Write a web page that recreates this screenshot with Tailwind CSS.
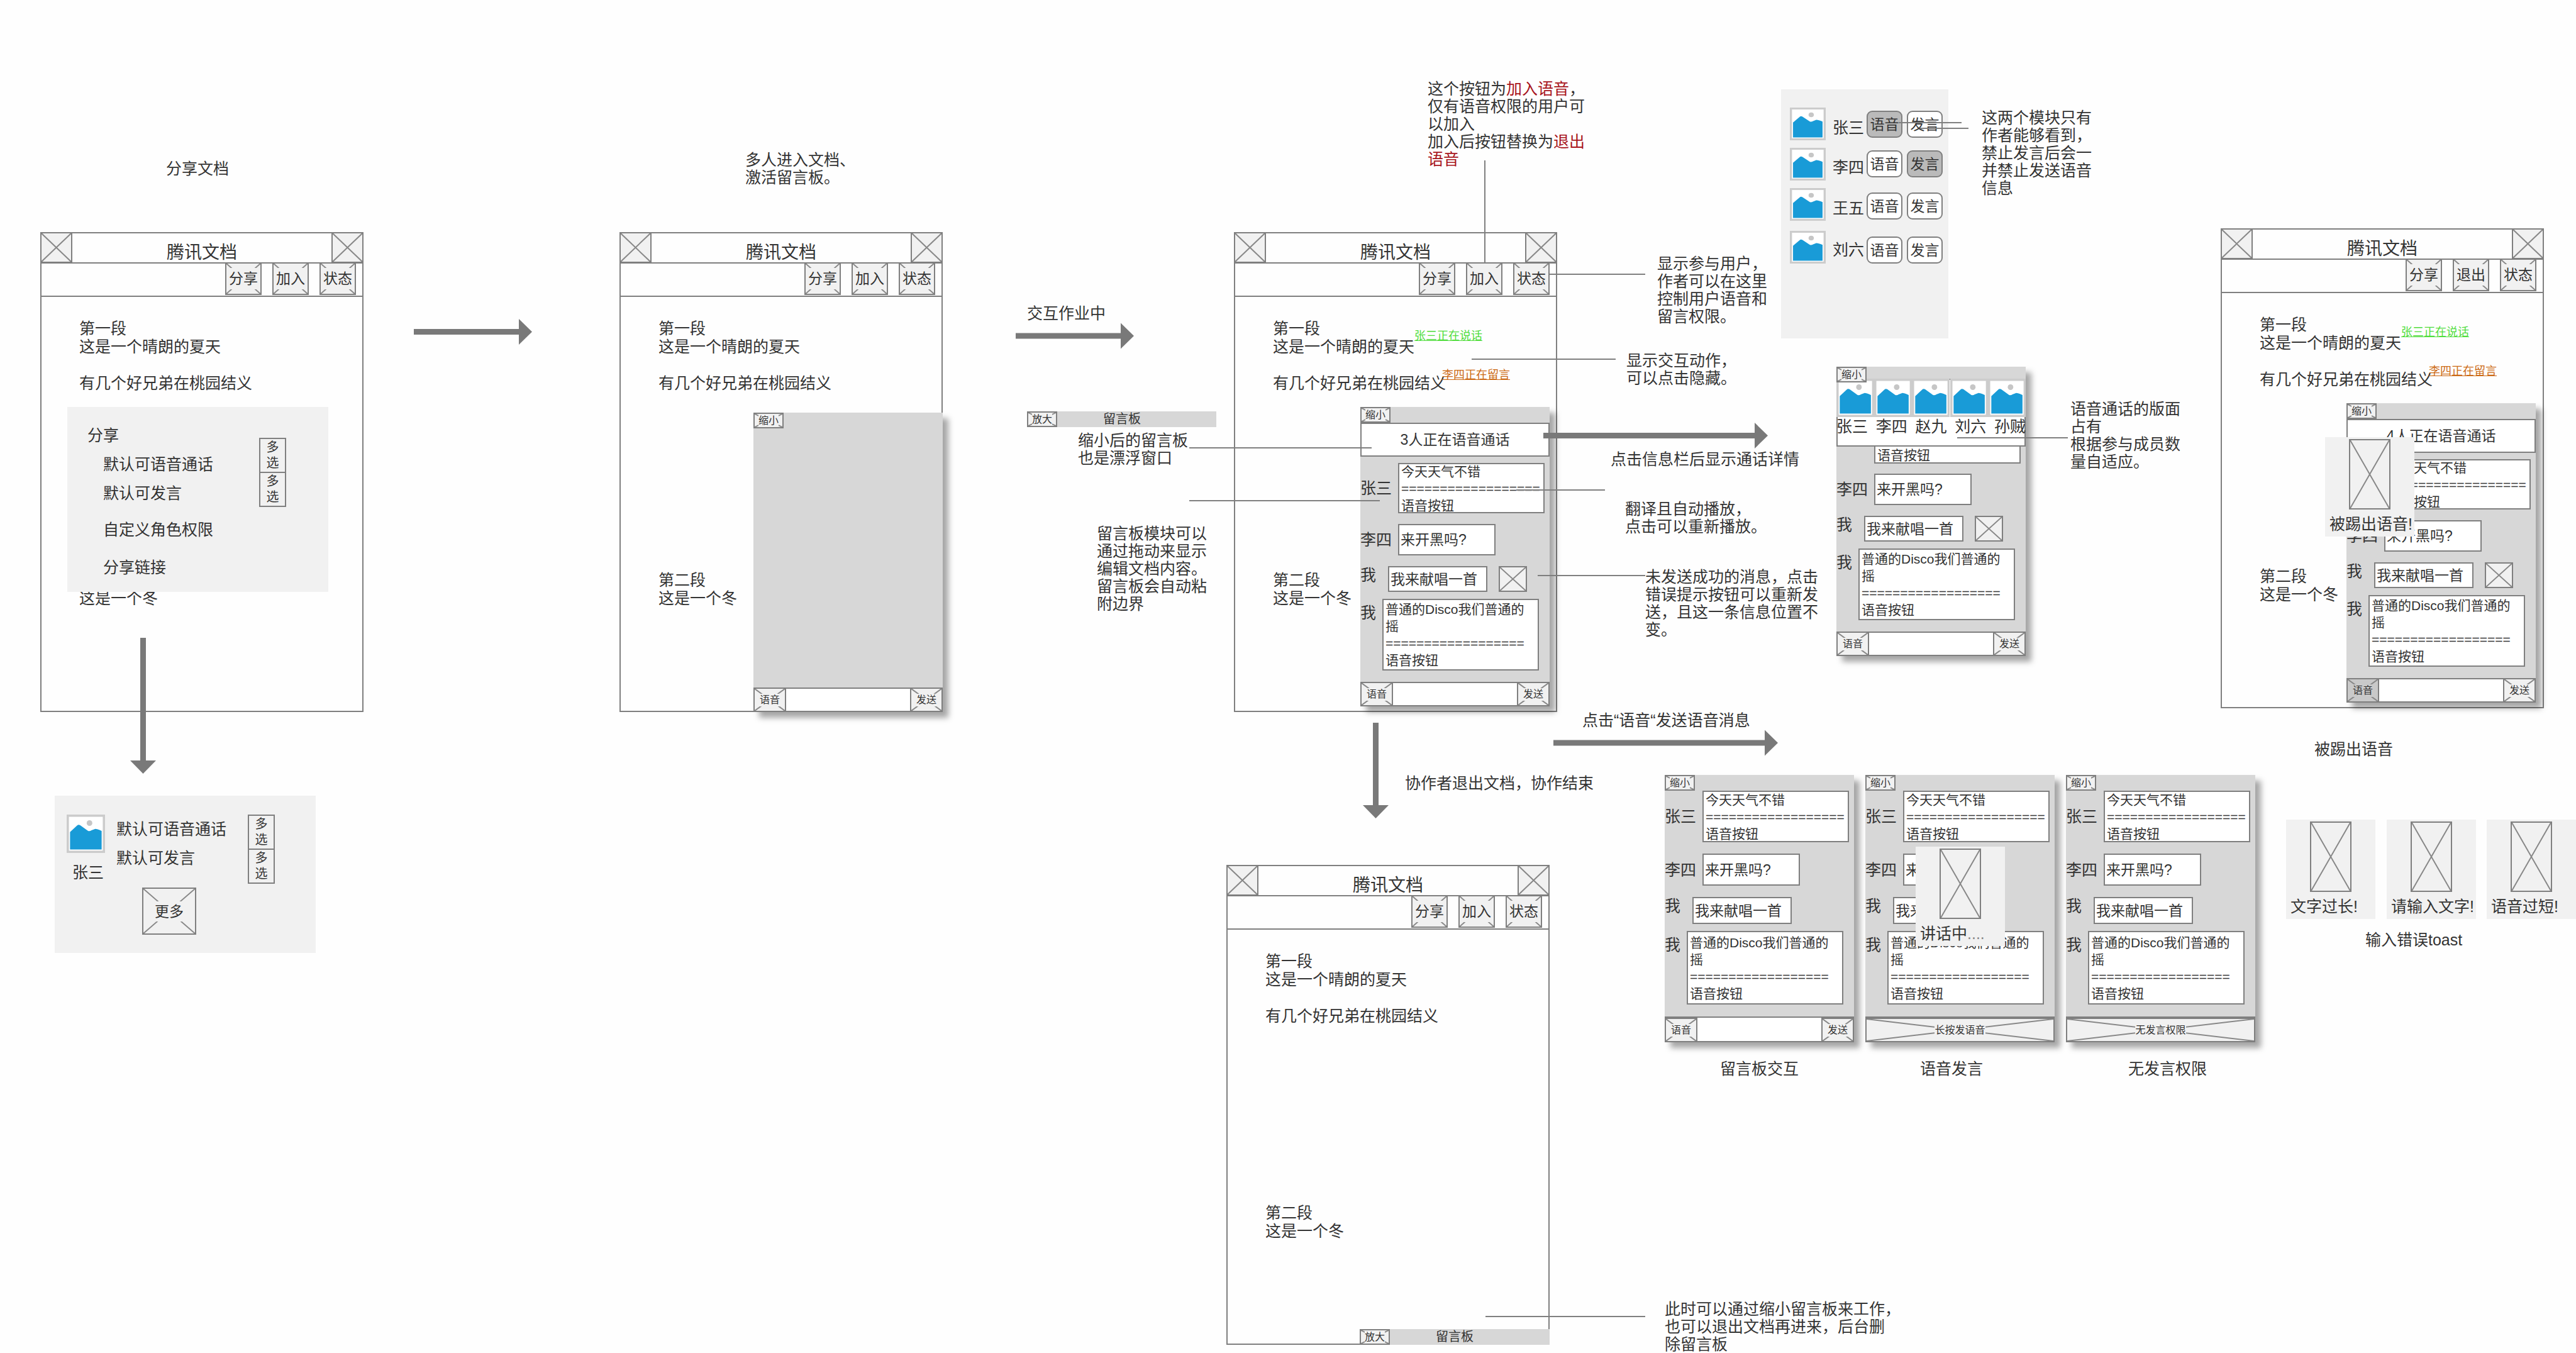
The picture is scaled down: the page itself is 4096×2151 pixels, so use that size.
<!DOCTYPE html>
<html lang="zh-CN">
<head>
<meta charset="utf-8">
<meta name="viewport" content="width=device-width, initial-scale=1">
<title>腾讯文档 留言板交互流程</title>
<script src="https://cdn.jsdelivr.net/npm/@tailwindcss/browser@4"></script>
</head>
<body class="bg-[#fefefe] font-['Liberation_Sans','Noto_Sans_CJK_SC',sans-serif] text-[25px] leading-[28px] text-[#333]">

<!-- shared shapes -->
<svg class="hidden" aria-hidden="true">
  <symbol id="cross" viewBox="0 0 100 100" preserveAspectRatio="none">
    <path d="M0 0L100 100M100 0L0 100" fill="none" stroke="#888" stroke-width="2" vector-effect="non-scaling-stroke"/>
  </symbol>
  <symbol id="picture" viewBox="0 0 68 68" preserveAspectRatio="none">
    <rect width="68" height="68" fill="#ccc"/>
    <rect x="4" y="4" width="60" height="60" fill="#fff"/>
    <circle cx="40.5" cy="15" r="5" fill="#c6c6c6"/>
    <path d="M6 31L19 19Q21 17 24 19L38 29Q41 30 44 28L50 25.500Q53 25 62 29V62H6Z" fill="#199bd7"/>
  </symbol>
</svg>

<main class="relative min-h-screen w-full overflow-hidden">

  <!-- captions and notes -->
  <p class="absolute left-[264px] top-[254px] whitespace-nowrap">分享文档</p>
  <p class="absolute left-[1185px] top-[240px] whitespace-nowrap">多人进入文档、<br>激活留言板。</p>
  <p class="absolute left-[1633px] top-[484px] whitespace-nowrap">交互作业中</p>
  <p class="absolute left-[2270px] top-[127px] whitespace-nowrap">这个按钮为<span class="text-[#a8141c]">加入语音</span>，<br>仅有语音权限的用户可<br>以加入<br>加入后按钮替换为<span class="text-[#a8141c]">退出<br>语音</span></p>
  <p class="absolute left-[2635px] top-[405px] whitespace-nowrap">显示参与用户，<br>作者可以在这里<br>控制用户语音和<br>留言权限。</p>
  <p class="absolute left-[2586px] top-[559px] whitespace-nowrap">显示交互动作，<br>可以点击隐藏。</p>
  <p class="absolute left-[3151px] top-[173px] whitespace-nowrap">这两个模块只有<br>作者能够看到，<br>禁止发言后会一<br>并禁止发送语音<br>信息</p>
  <p class="absolute left-[3292px] top-[636px] whitespace-nowrap">语音通话的版面<br>占有<br>根据参与成员数<br>量自适应。</p>
  <p class="absolute left-[1714px] top-[686px] whitespace-nowrap">缩小后的留言板<br>也是漂浮窗口</p>
  <p class="absolute left-[1744px] top-[834px] whitespace-nowrap">留言板模块可以<br>通过拖动来显示<br>编辑文档内容。<br>留言板会自动粘<br>附边界</p>
  <p class="absolute left-[2561px] top-[716px] whitespace-nowrap">点击信息栏后显示通话详情</p>
  <p class="absolute left-[2584px] top-[795px] whitespace-nowrap">翻译且自动播放，<br>点击可以重新播放。</p>
  <p class="absolute left-[2616px] top-[903px] whitespace-nowrap">未发送成功的消息，点击<br>错误提示按钮可以重新发<br>送，且这一条信息位置不<br>变。</p>
  <p class="absolute left-[2516px] top-[1131px] whitespace-nowrap">点击“语音“发送语音消息</p>
  <p class="absolute left-[2234px] top-[1231px] whitespace-nowrap">协作者退出文档，协作结束</p>
  <p class="absolute left-[2735px] top-[1685px] whitespace-nowrap">留言板交互</p>
  <p class="absolute left-[3053px] top-[1685px] whitespace-nowrap">语音发言</p>
  <p class="absolute left-[3384px] top-[1685px] whitespace-nowrap">无发言权限</p>
  <p class="absolute left-[3680px] top-[1177px] whitespace-nowrap">被踢出语音</p>
  <p class="absolute left-[3761px] top-[1480px] whitespace-nowrap">输入错误toast</p>
  <p class="absolute left-[2647px] top-[2067px] whitespace-nowrap">此时可以通过缩小留言板来工作，<br>也可以退出文档再进来，后台删<br>除留言板</p>

  <!-- screen 1: share -->
  <section class="absolute left-[64px] top-[369px] h-[763px] w-[514px] border-2 border-[#7f7f7f]">
    <header class="-mx-0.5 -mt-0.5 flex h-[50px] justify-between border-b-2 border-[#7f7f7f]">
      <button aria-label="返回" class="h-[49px] w-[51px] border-2 border-[#7f7f7f] bg-[#f1f1f1]"><svg class="size-full"><use href="#cross"/></svg></button>
      <h2 class="self-end text-[28px] leading-[30px]">腾讯文档</h2>
      <button aria-label="菜单" class="h-[49px] w-[51px] border-2 border-[#7f7f7f] bg-[#f1f1f1]"><svg class="size-full"><use href="#cross"/></svg></button>
    </header>
    <nav class="flex h-[53px] justify-end gap-[17px] border-b-2 border-[#7f7f7f] pr-[10px]">
      <button class="relative -mt-0.5 grid h-[52px] w-[58px] place-items-center border-2 border-[#7f7f7f] bg-[#f1f1f1] text-[23px]"><svg class="absolute inset-0 size-full"><use href="#cross"/></svg><span class="relative bg-[#f1f1f1] leading-[34px]">分享</span></button>
      <button class="relative -mt-0.5 grid h-[52px] w-[58px] place-items-center border-2 border-[#7f7f7f] bg-[#f1f1f1] text-[23px]"><svg class="absolute inset-0 size-full"><use href="#cross"/></svg><span class="relative bg-[#f1f1f1] leading-[34px]">加入</span></button>
      <button class="relative -mt-0.5 grid h-[52px] w-[58px] place-items-center border-2 border-[#7f7f7f] bg-[#f1f1f1] text-[23px]"><svg class="absolute inset-0 size-full"><use href="#cross"/></svg><span class="relative bg-[#f1f1f1] leading-[34px]">状态</span></button>
    </nav>
    <div class="pl-[60px] pt-[36px] leading-[29px]">
      <p>第一段<br>这是一个晴朗的夏天</p>
      <p class="mt-[29px]">有几个好兄弟在桃园结义</p>
      <p class="mt-[284px]">第二段<br>这是一个冬</p>
    </div>
  </section>
  <section class="absolute left-[107px] top-[647px] flex h-[294px] w-[415px] justify-between bg-[#f1f1f1] pl-[32px] pr-[67px]">
    <div class="pt-[31px]">
      <h3>分享</h3>
      <ul class="pl-[25px] pt-[18px]">
        <li>默认可语音通话</li>
        <li class="mt-[18px]">默认可发言</li>
        <li class="mt-[30px]">自定义角色权限</li>
        <li class="mt-[32px]">分享链接</li>
      </ul>
    </div>
    <div class="flex flex-col pt-[49px] text-[20px] leading-[25px]">
      <button class="grid h-[56px] w-[43px] place-items-center border-2 border-[#7f7f7f]"><span class="w-5">多选</span></button>
      <button class="-mt-0.5 grid h-[56px] w-[43px] place-items-center border-2 border-[#7f7f7f]"><span class="w-5">多选</span></button>
    </div>
  </section>

  <!-- permission card -->
  <section class="absolute left-[87px] top-[1265px] h-[250px] w-[415px] bg-[#f1f1f1] pl-[19px] pr-[65px] pt-[30px]">
    <div class="flex justify-between">
      <div class="flex gap-[18px]">
        <div>
          <svg class="size-[61px]"><use href="#picture"/></svg>
          <p class="pl-[9px] pt-[17px]">张三</p>
        </div>
        <ul class="pt-[9px]">
          <li>默认可语音通话</li>
          <li class="mt-[18px]">默认可发言</li>
        </ul>
      </div>
      <div class="flex flex-col text-[20px] leading-[25px]">
        <button class="grid h-[56px] w-[43px] place-items-center border-2 border-[#7f7f7f]"><span class="w-5">多选</span></button>
        <button class="-mt-0.5 grid h-[56px] w-[43px] place-items-center border-2 border-[#7f7f7f]"><span class="w-5">多选</span></button>
      </div>
    </div>
    <button class="relative ml-[120px] mt-[6px] grid h-[75px] w-[86px] place-items-center border-2 border-[#7f7f7f] text-[23px]"><svg class="absolute inset-0 size-full"><use href="#cross"/></svg><span class="relative bg-[#f1f1f1] leading-[32px]">更多</span></button>
  </section>

  <!-- screen 2: board opened -->
  <section class="absolute left-[985px] top-[369px] h-[763px] w-[514px] border-2 border-[#7f7f7f]">
    <header class="-mx-0.5 -mt-0.5 flex h-[50px] justify-between border-b-2 border-[#7f7f7f]">
      <button aria-label="返回" class="h-[49px] w-[51px] border-2 border-[#7f7f7f] bg-[#f1f1f1]"><svg class="size-full"><use href="#cross"/></svg></button>
      <h2 class="self-end text-[28px] leading-[30px]">腾讯文档</h2>
      <button aria-label="菜单" class="h-[49px] w-[51px] border-2 border-[#7f7f7f] bg-[#f1f1f1]"><svg class="size-full"><use href="#cross"/></svg></button>
    </header>
    <nav class="flex h-[53px] justify-end gap-[17px] border-b-2 border-[#7f7f7f] pr-[10px]">
      <button class="relative -mt-0.5 grid h-[52px] w-[58px] place-items-center border-2 border-[#7f7f7f] bg-[#f1f1f1] text-[23px]"><svg class="absolute inset-0 size-full"><use href="#cross"/></svg><span class="relative bg-[#f1f1f1] leading-[34px]">分享</span></button>
      <button class="relative -mt-0.5 grid h-[52px] w-[58px] place-items-center border-2 border-[#7f7f7f] bg-[#f1f1f1] text-[23px]"><svg class="absolute inset-0 size-full"><use href="#cross"/></svg><span class="relative bg-[#f1f1f1] leading-[34px]">加入</span></button>
      <button class="relative -mt-0.5 grid h-[52px] w-[58px] place-items-center border-2 border-[#7f7f7f] bg-[#f1f1f1] text-[23px]"><svg class="absolute inset-0 size-full"><use href="#cross"/></svg><span class="relative bg-[#f1f1f1] leading-[34px]">状态</span></button>
    </nav>
    <div class="pl-[60px] pt-[36px] leading-[29px]">
      <p>第一段<br>这是一个晴朗的夏天</p>
      <p class="mt-[29px]">有几个好兄弟在桃园结义</p>
      <p class="mt-[284px]">第二段<br>这是一个冬</p>
    </div>
  </section>
  <section class="absolute left-[1198px] top-[656px] flex h-[476px] w-[301px] flex-col justify-between bg-[#d7d7d7] shadow-[9px_9px_9px_rgba(0,0,0,0.35)]">
    <button class="relative grid h-[25px] w-12 place-items-center border-2 border-[#7f7f7f] bg-[#f1f1f1] text-[16px]"><svg class="absolute inset-0 size-full"><use href="#cross"/></svg><span class="relative bg-[#f1f1f1] leading-[17px]">缩小</span></button>
    <form class="flex h-[39px] text-[16px]">
      <button type="button" class="relative grid w-[52px] place-items-center border-2 border-[#7f7f7f] bg-[#f1f1f1]"><svg class="absolute inset-0 size-full"><use href="#cross"/></svg><span class="relative bg-[#f1f1f1] leading-[20px]">语音</span></button>
      <input aria-label="留言" class="min-w-0 flex-1 border-y-2 border-[#7f7f7f] bg-white">
      <button type="button" class="relative grid w-[52px] place-items-center border-2 border-[#7f7f7f] bg-[#f1f1f1]"><svg class="absolute inset-0 size-full"><use href="#cross"/></svg><span class="relative bg-[#f1f1f1] leading-[20px]">发送</span></button>
    </form>
  </section>

  <!-- minimised board -->
  <section class="absolute left-[1633px] top-[654px] flex h-[25px] w-[301px] gap-[73px] bg-[#d7d7d7]">
    <button class="relative grid w-12 place-items-center border-2 border-[#7f7f7f] bg-[#f1f1f1] text-[16px]"><svg class="absolute inset-0 size-full"><use href="#cross"/></svg><span class="relative bg-[#f1f1f1] leading-[17px]">放大</span></button>
    <h3 class="text-[20px] leading-[25px]">留言板</h3>
  </section>

  <!-- screen 3: collaborating -->
  <section class="absolute left-[1962px] top-[369px] h-[763px] w-[514px] border-2 border-[#7f7f7f]">
    <header class="-mx-0.5 -mt-0.5 flex h-[50px] justify-between border-b-2 border-[#7f7f7f]">
      <button aria-label="返回" class="h-[49px] w-[51px] border-2 border-[#7f7f7f] bg-[#f1f1f1]"><svg class="size-full"><use href="#cross"/></svg></button>
      <h2 class="self-end text-[28px] leading-[30px]">腾讯文档</h2>
      <button aria-label="菜单" class="h-[49px] w-[51px] border-2 border-[#7f7f7f] bg-[#f1f1f1]"><svg class="size-full"><use href="#cross"/></svg></button>
    </header>
    <nav class="flex h-[53px] justify-end gap-[17px] border-b-2 border-[#7f7f7f] pr-[10px]">
      <button class="relative -mt-0.5 grid h-[52px] w-[58px] place-items-center border-2 border-[#7f7f7f] bg-[#f1f1f1] text-[23px]"><svg class="absolute inset-0 size-full"><use href="#cross"/></svg><span class="relative bg-[#f1f1f1] leading-[34px]">分享</span></button>
      <button class="relative -mt-0.5 grid h-[52px] w-[58px] place-items-center border-2 border-[#7f7f7f] bg-[#f1f1f1] text-[23px]"><svg class="absolute inset-0 size-full"><use href="#cross"/></svg><span class="relative bg-[#f1f1f1] leading-[34px]">加入</span></button>
      <button class="relative -mt-0.5 grid h-[52px] w-[58px] place-items-center border-2 border-[#7f7f7f] bg-[#f1f1f1] text-[23px]"><svg class="absolute inset-0 size-full"><use href="#cross"/></svg><span class="relative bg-[#f1f1f1] leading-[34px]">状态</span></button>
    </nav>
    <div class="pl-[60px] pt-[36px] leading-[29px]">
      <p>第一段<br>这是一个晴朗的夏天</p>
      <p class="mt-[29px]">有几个好兄弟在桃园结义</p>
      <p class="mt-[284px]">第二段<br>这是一个冬</p>
    </div>
    <a href="#" class="absolute left-[285px] top-[151px] text-[18px] leading-[24px] text-[#4fdd3b] underline">张三正在说话</a>
    <a href="#" class="absolute left-[329px] top-[213px] text-[18px] leading-[24px] text-[#cc6a14] underline">李四正在留言</a>
  </section>
  <section class="absolute left-[2163px] top-[647px] w-[301px] bg-[#d7d7d7] shadow-[9px_9px_9px_rgba(0,0,0,0.35)]">
    <button class="relative grid h-[25px] w-12 place-items-center border-2 border-[#7f7f7f] bg-[#f1f1f1] text-[16px]"><svg class="absolute inset-0 size-full"><use href="#cross"/></svg><span class="relative bg-[#f1f1f1] leading-[17px]">缩小</span></button>
    <button class="grid h-[54px] w-full place-items-center border-2 border-[#7f7f7f] bg-white text-[23px]">3人正在语音通话</button>
    <ul class="pt-[10px]">
      <li class="flex items-center"><b class="w-[60px] font-normal">张三</b><p class="flex h-[80px] w-[233px] items-center border-2 border-[#7f7f7f] bg-white pl-[3px] text-[21px] leading-[27px]">今天天气不错<br>==================<br>语音按钮</p></li>
      <li class="mt-[17px] flex items-center"><b class="w-[60px] font-normal">李四</b><p class="flex h-[50px] w-[155px] items-center border-2 border-[#7f7f7f] bg-white pl-[2px] text-[23px]">来开黑吗?</p></li>
      <li class="mt-[17px] flex"><b class="w-[44px] font-normal">我</b><p class="flex h-[41px] w-[158px] items-center border-2 border-[#7f7f7f] bg-white pl-[2px] text-[23px]">我来献唱一首</p><button aria-label="重新发送" class="ml-[18px] h-[41px] w-[45px] border-2 border-[#7f7f7f] bg-[#f1f1f1]"><svg class="size-full"><use href="#cross"/></svg></button></li>
      <li class="mt-[11px] flex"><b class="w-[35px] pt-[8px] font-normal">我</b><p class="flex h-[114px] w-[249px] items-center border-2 border-[#7f7f7f] bg-white pl-[3px] text-[21px] leading-[27px]">普通的Disco我们普通的<br>摇<br>==================<br>语音按钮</p></li>
    </ul>
    <form class="mt-[18px] flex h-[39px] text-[16px]">
      <button type="button" class="relative grid w-[52px] place-items-center border-2 border-[#7f7f7f] bg-[#f1f1f1]"><svg class="absolute inset-0 size-full"><use href="#cross"/></svg><span class="relative bg-[#f1f1f1] leading-[20px]">语音</span></button>
      <input aria-label="留言" class="min-w-0 flex-1 border-y-2 border-[#7f7f7f] bg-white">
      <button type="button" class="relative grid w-[52px] place-items-center border-2 border-[#7f7f7f] bg-[#f1f1f1]"><svg class="absolute inset-0 size-full"><use href="#cross"/></svg><span class="relative bg-[#f1f1f1] leading-[20px]">发送</span></button>
    </form>
  </section>

  <!-- participants -->
  <section class="absolute left-[2832px] top-[142px] flex h-[396px] w-[266px] flex-col bg-[#f1f1f1] pl-[14px] pt-[29px]">
    <div class="flex items-start">
      <svg class="h-[52px] w-[57px]"><use href="#picture"/></svg><span class="ml-[11px] mt-[18px] w-[54px]">张三</span>
      <button aria-pressed="true" class="mt-[5px] h-[43px] w-[57px] rounded-[9px] border-2 border-[#7f7f7f] bg-[#bababa] text-[23px]">语音</button>
      <button class="ml-[7px] mt-[5px] h-[43px] w-[57px] rounded-[9px] border-2 border-[#7f7f7f] bg-white text-[23px]">发言</button>
    </div>
    <div class="mt-[12px] flex items-start">
      <svg class="h-[52px] w-[57px]"><use href="#picture"/></svg><span class="ml-[11px] mt-[17px] w-[54px]">李四</span>
      <button class="mt-[4px] h-[43px] w-[57px] rounded-[9px] border-2 border-[#7f7f7f] bg-white text-[23px]">语音</button>
      <button aria-pressed="true" class="ml-[7px] mt-[4px] h-[43px] w-[57px] rounded-[9px] border-2 border-[#7f7f7f] bg-[#bababa] text-[23px]">发言</button>
    </div>
    <div class="mt-[12px] flex items-start">
      <svg class="h-[52px] w-[57px]"><use href="#picture"/></svg><span class="ml-[11px] mt-[18px] w-[54px]">王五</span>
      <button class="mt-[7px] h-[43px] w-[57px] rounded-[9px] border-2 border-[#7f7f7f] bg-white text-[23px]">语音</button>
      <button class="ml-[7px] mt-[7px] h-[43px] w-[57px] rounded-[9px] border-2 border-[#7f7f7f] bg-white text-[23px]">发言</button>
    </div>
    <div class="mt-[16px] flex items-start">
      <svg class="h-[52px] w-[57px]"><use href="#picture"/></svg><span class="ml-[11px] mt-[16px] w-[54px]">刘六</span>
      <button class="mt-[9px] h-[43px] w-[57px] rounded-[9px] border-2 border-[#7f7f7f] bg-white text-[23px]">语音</button>
      <button class="ml-[7px] mt-[9px] h-[43px] w-[57px] rounded-[9px] border-2 border-[#7f7f7f] bg-white text-[23px]">发言</button>
    </div>
  </section>

  <!-- call details -->
  <section class="absolute left-[2920px] top-[583px] w-[301px] bg-[#d7d7d7] shadow-[9px_9px_9px_rgba(0,0,0,0.35)]">
    <button class="relative z-10 grid h-[25px] w-12 place-items-center border-2 border-[#7f7f7f] bg-[#f1f1f1] text-[16px]"><svg class="absolute inset-0 size-full"><use href="#cross"/></svg><span class="relative bg-[#f1f1f1] leading-[17px]">缩小</span></button>
    <div class="-mt-[6px] h-[108px] border-2 border-[#7f7f7f] bg-white">
      <div class="-mx-0.5 -mt-0.5 grid grid-cols-5">
        <svg class="h-[61px] w-full"><use href="#picture"/></svg>
        <svg class="h-[61px] w-full"><use href="#picture"/></svg>
        <svg class="h-[61px] w-full"><use href="#picture"/></svg>
        <svg class="h-[61px] w-full"><use href="#picture"/></svg>
        <svg class="h-[61px] w-full"><use href="#picture"/></svg>
      </div>
      <div class="-mx-0.5 flex justify-between pt-px"><span>张三</span><span>李四</span><span>赵九</span><span>刘六</span><span>孙贼</span></div>
    </div>
    <ul>
      <li class="pl-[60px]"><p class="h-[27px] w-[233px] border-2 border-t-0 border-[#7f7f7f] bg-white pl-[3px] text-[21px] leading-[27px]">语音按钮</p></li>
      <li class="mt-[16px] flex items-center"><b class="w-[60px] font-normal">李四</b><p class="flex h-[50px] w-[155px] items-center border-2 border-[#7f7f7f] bg-white pl-[2px] text-[23px]">来开黑吗?</p></li>
      <li class="mt-[17px] flex"><b class="w-[44px] font-normal">我</b><p class="flex h-[41px] w-[158px] items-center border-2 border-[#7f7f7f] bg-white pl-[2px] text-[23px]">我来献唱一首</p><button aria-label="重新发送" class="ml-[18px] h-[41px] w-[45px] border-2 border-[#7f7f7f] bg-[#f1f1f1]"><svg class="size-full"><use href="#cross"/></svg></button></li>
      <li class="mt-[11px] flex"><b class="w-[35px] pt-[8px] font-normal">我</b><p class="flex h-[114px] w-[249px] items-center border-2 border-[#7f7f7f] bg-white pl-[3px] text-[21px] leading-[27px]">普通的Disco我们普通的<br>摇<br>==================<br>语音按钮</p></li>
    </ul>
    <form class="mt-[18px] flex h-[39px] text-[16px]">
      <button type="button" class="relative grid w-[52px] place-items-center border-2 border-[#7f7f7f] bg-[#f1f1f1]"><svg class="absolute inset-0 size-full"><use href="#cross"/></svg><span class="relative bg-[#f1f1f1] leading-[20px]">语音</span></button>
      <input aria-label="留言" class="min-w-0 flex-1 border-y-2 border-[#7f7f7f] bg-white">
      <button type="button" class="relative grid w-[52px] place-items-center border-2 border-[#7f7f7f] bg-[#f1f1f1]"><svg class="absolute inset-0 size-full"><use href="#cross"/></svg><span class="relative bg-[#f1f1f1] leading-[20px]">发送</span></button>
    </form>
  </section>

  <!-- screen 4: collaboration ended -->
  <section class="absolute left-[1950px] top-[1375px] h-[763px] w-[514px] border-2 border-[#7f7f7f]">
    <header class="-mx-0.5 -mt-0.5 flex h-[50px] justify-between border-b-2 border-[#7f7f7f]">
      <button aria-label="返回" class="h-[49px] w-[51px] border-2 border-[#7f7f7f] bg-[#f1f1f1]"><svg class="size-full"><use href="#cross"/></svg></button>
      <h2 class="self-end text-[28px] leading-[30px]">腾讯文档</h2>
      <button aria-label="菜单" class="h-[49px] w-[51px] border-2 border-[#7f7f7f] bg-[#f1f1f1]"><svg class="size-full"><use href="#cross"/></svg></button>
    </header>
    <nav class="flex h-[53px] justify-end gap-[17px] border-b-2 border-[#7f7f7f] pr-[10px]">
      <button class="relative -mt-0.5 grid h-[52px] w-[58px] place-items-center border-2 border-[#7f7f7f] bg-[#f1f1f1] text-[23px]"><svg class="absolute inset-0 size-full"><use href="#cross"/></svg><span class="relative bg-[#f1f1f1] leading-[34px]">分享</span></button>
      <button class="relative -mt-0.5 grid h-[52px] w-[58px] place-items-center border-2 border-[#7f7f7f] bg-[#f1f1f1] text-[23px]"><svg class="absolute inset-0 size-full"><use href="#cross"/></svg><span class="relative bg-[#f1f1f1] leading-[34px]">加入</span></button>
      <button class="relative -mt-0.5 grid h-[52px] w-[58px] place-items-center border-2 border-[#7f7f7f] bg-[#f1f1f1] text-[23px]"><svg class="absolute inset-0 size-full"><use href="#cross"/></svg><span class="relative bg-[#f1f1f1] leading-[34px]">状态</span></button>
    </nav>
    <div class="pl-[60px] pt-[36px] leading-[29px]">
      <p>第一段<br>这是一个晴朗的夏天</p>
      <p class="mt-[29px]">有几个好兄弟在桃园结义</p>
      <p class="mt-[284px]">第二段<br>这是一个冬</p>
    </div>
  </section>
  <section class="absolute left-[2162px] top-[2113px] flex h-[25px] w-[302px] gap-[73px] bg-[#d7d7d7]">
    <button class="relative grid w-12 place-items-center border-2 border-[#7f7f7f] bg-[#f1f1f1] text-[16px]"><svg class="absolute inset-0 size-full"><use href="#cross"/></svg><span class="relative bg-[#f1f1f1] leading-[17px]">放大</span></button>
    <h3 class="text-[20px] leading-[25px]">留言板</h3>
  </section>

  <!-- board variant: default -->
  <section class="absolute left-[2647px] top-[1232px] w-[301px] bg-[#d7d7d7] shadow-[9px_9px_9px_rgba(0,0,0,0.35)]">
    <button class="relative grid h-[25px] w-12 place-items-center border-2 border-[#7f7f7f] bg-[#f1f1f1] text-[16px]"><svg class="absolute inset-0 size-full"><use href="#cross"/></svg><span class="relative bg-[#f1f1f1] leading-[17px]">缩小</span></button>
    <ul>
      <li class="flex items-center"><b class="w-[60px] font-normal">张三</b><p class="flex h-[82px] w-[233px] items-center border-2 border-[#7f7f7f] bg-white pl-[3px] text-[21px] leading-[27px]">今天天气不错<br>==================<br>语音按钮</p></li>
      <li class="mt-[18px] flex items-center"><b class="w-[60px] font-normal">李四</b><p class="flex h-[51px] w-[155px] items-center border-2 border-[#7f7f7f] bg-white pl-[2px] text-[23px]">来开黑吗?</p></li>
      <li class="mt-[18px] flex"><b class="w-[44px] font-normal">我</b><p class="flex h-[43px] w-[158px] items-center border-2 border-[#7f7f7f] bg-white pl-[2px] text-[23px]">我来献唱一首</p></li>
      <li class="mt-[11px] flex"><b class="w-[35px] pt-[8px] font-normal">我</b><p class="flex h-[117px] w-[249px] items-center border-2 border-[#7f7f7f] bg-white pl-[3px] text-[21px] leading-[27px]">普通的Disco我们普通的<br>摇<br>==================<br>语音按钮</p></li>
    </ul>
    <form class="mt-[19px] flex h-[41px] border-2 border-[#7f7f7f] bg-white text-[16px]">
      <button type="button" class="relative -mb-0.5 -ml-0.5 grid w-[52px] place-items-center border-2 border-[#7f7f7f] bg-[#f1f1f1]"><svg class="absolute inset-0 size-full"><use href="#cross"/></svg><span class="relative bg-[#f1f1f1] leading-[20px]">语音</span></button>
      <input aria-label="留言" class="min-w-0 flex-1 bg-white">
      <button type="button" class="relative -mb-0.5 -mr-0.5 grid w-[52px] place-items-center border-2 border-[#7f7f7f] bg-[#f1f1f1]"><svg class="absolute inset-0 size-full"><use href="#cross"/></svg><span class="relative bg-[#f1f1f1] leading-[20px]">发送</span></button>
    </form>
  </section>

  <!-- board variant: speaking -->
  <section class="absolute left-[2966px] top-[1232px] w-[301px] bg-[#d7d7d7] shadow-[9px_9px_9px_rgba(0,0,0,0.35)]">
    <button class="relative grid h-[25px] w-12 place-items-center border-2 border-[#7f7f7f] bg-[#f1f1f1] text-[16px]"><svg class="absolute inset-0 size-full"><use href="#cross"/></svg><span class="relative bg-[#f1f1f1] leading-[17px]">缩小</span></button>
    <ul>
      <li class="flex items-center"><b class="w-[60px] font-normal">张三</b><p class="flex h-[82px] w-[233px] items-center border-2 border-[#7f7f7f] bg-white pl-[3px] text-[21px] leading-[27px]">今天天气不错<br>==================<br>语音按钮</p></li>
      <li class="mt-[18px] flex items-center"><b class="w-[60px] font-normal">李四</b><p class="flex h-[51px] w-[155px] items-center border-2 border-[#7f7f7f] bg-white pl-[2px] text-[23px]">来开黑吗?</p></li>
      <li class="mt-[18px] flex"><b class="w-[44px] font-normal">我</b><p class="flex h-[43px] w-[158px] items-center border-2 border-[#7f7f7f] bg-white pl-[2px] text-[23px]">我来献唱一首</p></li>
      <li class="mt-[11px] flex"><b class="w-[35px] pt-[8px] font-normal">我</b><p class="flex h-[117px] w-[249px] items-center border-2 border-[#7f7f7f] bg-white pl-[3px] text-[21px] leading-[27px]">普通的Disco我们普通的<br>摇<br>==================<br>语音按钮</p></li>
    </ul>
    <button class="relative mt-[19px] grid h-[41px] w-full place-items-center border-2 border-t-4 border-[#7f7f7f] bg-[#f1f1f1] text-[16px]"><svg class="absolute inset-0 size-full"><use href="#cross"/></svg><span class="relative bg-[#f1f1f1] leading-[20px]">长按发语音</span></button>
  </section>
  <div class="absolute left-[3046px] top-[1346px] h-[158px] w-[142px] bg-[#f1f1f1] pt-[3px]">
    <div class="mx-auto h-[112px] w-[66px] border-2 border-[#7f7f7f]"><svg class="size-full"><use href="#cross"/></svg></div>
    <p class="whitespace-nowrap pl-[7px] pt-[9px]">讲话中<span class="text-[#888]">....</span></p>
  </div>

  <!-- board variant: muted -->
  <section class="absolute left-[3285px] top-[1232px] w-[301px] bg-[#d7d7d7] shadow-[9px_9px_9px_rgba(0,0,0,0.35)]">
    <button class="relative grid h-[25px] w-12 place-items-center border-2 border-[#7f7f7f] bg-[#f1f1f1] text-[16px]"><svg class="absolute inset-0 size-full"><use href="#cross"/></svg><span class="relative bg-[#f1f1f1] leading-[17px]">缩小</span></button>
    <ul>
      <li class="flex items-center"><b class="w-[60px] font-normal">张三</b><p class="flex h-[82px] w-[233px] items-center border-2 border-[#7f7f7f] bg-white pl-[3px] text-[21px] leading-[27px]">今天天气不错<br>==================<br>语音按钮</p></li>
      <li class="mt-[18px] flex items-center"><b class="w-[60px] font-normal">李四</b><p class="flex h-[51px] w-[155px] items-center border-2 border-[#7f7f7f] bg-white pl-[2px] text-[23px]">来开黑吗?</p></li>
      <li class="mt-[18px] flex"><b class="w-[44px] font-normal">我</b><p class="flex h-[43px] w-[158px] items-center border-2 border-[#7f7f7f] bg-white pl-[2px] text-[23px]">我来献唱一首</p></li>
      <li class="mt-[11px] flex"><b class="w-[35px] pt-[8px] font-normal">我</b><p class="flex h-[117px] w-[249px] items-center border-2 border-[#7f7f7f] bg-white pl-[3px] text-[21px] leading-[27px]">普通的Disco我们普通的<br>摇<br>==================<br>语音按钮</p></li>
    </ul>
    <button class="relative mt-[19px] grid h-[41px] w-full place-items-center border-2 border-t-4 border-[#7f7f7f] bg-[#f1f1f1] text-[16px]"><svg class="absolute inset-0 size-full"><use href="#cross"/></svg><span class="relative bg-[#f1f1f1] leading-[20px]">无发言权限</span></button>
  </section>

  <!-- screen 5: removed from the call -->
  <section class="absolute left-[3531px] top-[363px] h-[763px] w-[514px] border-2 border-[#7f7f7f]">
    <header class="-mx-0.5 -mt-0.5 flex h-[50px] justify-between border-b-2 border-[#7f7f7f]">
      <button aria-label="返回" class="h-[49px] w-[51px] border-2 border-[#7f7f7f] bg-[#f1f1f1]"><svg class="size-full"><use href="#cross"/></svg></button>
      <h2 class="self-end text-[28px] leading-[30px]">腾讯文档</h2>
      <button aria-label="菜单" class="h-[49px] w-[51px] border-2 border-[#7f7f7f] bg-[#f1f1f1]"><svg class="size-full"><use href="#cross"/></svg></button>
    </header>
    <nav class="flex h-[53px] justify-end gap-[17px] border-b-2 border-[#7f7f7f] pr-[10px]">
      <button class="relative -mt-0.5 grid h-[52px] w-[58px] place-items-center border-2 border-[#7f7f7f] bg-[#f1f1f1] text-[23px]"><svg class="absolute inset-0 size-full"><use href="#cross"/></svg><span class="relative bg-[#f1f1f1] leading-[34px]">分享</span></button>
      <button class="relative -mt-0.5 grid h-[52px] w-[58px] place-items-center border-2 border-[#7f7f7f] bg-[#f1f1f1] text-[23px]"><svg class="absolute inset-0 size-full"><use href="#cross"/></svg><span class="relative bg-[#f1f1f1] leading-[34px]">退出</span></button>
      <button class="relative -mt-0.5 grid h-[52px] w-[58px] place-items-center border-2 border-[#7f7f7f] bg-[#f1f1f1] text-[23px]"><svg class="absolute inset-0 size-full"><use href="#cross"/></svg><span class="relative bg-[#f1f1f1] leading-[34px]">状态</span></button>
    </nav>
    <div class="pl-[60px] pt-[36px] leading-[29px]">
      <p>第一段<br>这是一个晴朗的夏天</p>
      <p class="mt-[29px]">有几个好兄弟在桃园结义</p>
      <p class="mt-[284px]">第二段<br>这是一个冬</p>
    </div>
    <a href="#" class="absolute left-[285px] top-[151px] text-[18px] leading-[24px] text-[#4fdd3b] underline">张三正在说话</a>
    <a href="#" class="absolute left-[329px] top-[213px] text-[18px] leading-[24px] text-[#cc6a14] underline">李四正在留言</a>
  </section>
  <section class="absolute left-[3731px] top-[641px] w-[301px] bg-[#d7d7d7] shadow-[9px_9px_9px_rgba(0,0,0,0.35)]">
    <button class="relative grid h-[25px] w-12 place-items-center border-2 border-[#7f7f7f] bg-[#f1f1f1] text-[16px]"><svg class="absolute inset-0 size-full"><use href="#cross"/></svg><span class="relative bg-[#f1f1f1] leading-[17px]">缩小</span></button>
    <button class="grid h-[54px] w-full place-items-center border-2 border-[#7f7f7f] bg-white text-[23px]">4人正在语音通话</button>
    <ul class="pt-[10px]">
      <li class="flex items-center"><b class="w-[60px] font-normal">张三</b><p class="flex h-[80px] w-[233px] items-center border-2 border-[#7f7f7f] bg-white pl-[3px] text-[21px] leading-[27px]">今天天气不错<br>==================<br>语音按钮</p></li>
      <li class="mt-[17px] flex items-center"><b class="w-[60px] font-normal">李四</b><p class="flex h-[50px] w-[155px] items-center border-2 border-[#7f7f7f] bg-white pl-[2px] text-[23px]">来开黑吗?</p></li>
      <li class="mt-[17px] flex"><b class="w-[44px] font-normal">我</b><p class="flex h-[41px] w-[158px] items-center border-2 border-[#7f7f7f] bg-white pl-[2px] text-[23px]">我来献唱一首</p><button aria-label="重新发送" class="ml-[18px] h-[41px] w-[45px] border-2 border-[#7f7f7f] bg-[#f1f1f1]"><svg class="size-full"><use href="#cross"/></svg></button></li>
      <li class="mt-[11px] flex"><b class="w-[35px] pt-[8px] font-normal">我</b><p class="flex h-[114px] w-[249px] items-center border-2 border-[#7f7f7f] bg-white pl-[3px] text-[21px] leading-[27px]">普通的Disco我们普通的<br>摇<br>==================<br>语音按钮</p></li>
    </ul>
    <form class="mt-[18px] flex h-[39px] text-[16px]">
      <button type="button" class="relative grid w-[52px] place-items-center border-2 border-[#7f7f7f] bg-[#c9c9c9]"><svg class="absolute inset-0 size-full"><use href="#cross"/></svg><span class="relative bg-[#c9c9c9] leading-[20px]">语音</span></button>
      <input aria-label="留言" class="min-w-0 flex-1 border-y-2 border-[#7f7f7f] bg-white">
      <button type="button" class="relative grid w-[52px] place-items-center border-2 border-[#7f7f7f] bg-[#f1f1f1]"><svg class="absolute inset-0 size-full"><use href="#cross"/></svg><span class="relative bg-[#f1f1f1] leading-[20px]">发送</span></button>
    </form>
  </section>
  <div class="absolute left-[3697px] top-[695px] h-[158px] w-[142px] bg-[#f1f1f1] pt-[3px]">
    <div class="mx-auto h-[112px] w-[66px] border-2 border-[#7f7f7f]"><svg class="size-full"><use href="#cross"/></svg></div>
    <p class="whitespace-nowrap pl-[7px] pt-[9px]">被踢出语音!</p>
  </div>

  <!-- input error toasts -->
  <div class="absolute left-[3635px] top-[1303px] h-[158px] w-[142px] bg-[#f1f1f1] pt-[3px]">
    <div class="mx-auto h-[112px] w-[66px] border-2 border-[#7f7f7f]"><svg class="size-full"><use href="#cross"/></svg></div>
    <p class="whitespace-nowrap pl-[7px] pt-[9px]">文字过长!</p>
  </div>
  <div class="absolute left-[3795px] top-[1303px] h-[158px] w-[142px] bg-[#f1f1f1] pt-[3px]">
    <div class="mx-auto h-[112px] w-[66px] border-2 border-[#7f7f7f]"><svg class="size-full"><use href="#cross"/></svg></div>
    <p class="whitespace-nowrap pl-[7px] pt-[9px]">请输入文字!</p>
  </div>
  <div class="absolute left-[3954px] top-[1303px] h-[158px] w-[142px] bg-[#f1f1f1] pt-[3px]">
    <div class="mx-auto h-[112px] w-[66px] border-2 border-[#7f7f7f]"><svg class="size-full"><use href="#cross"/></svg></div>
    <p class="whitespace-nowrap pl-[7px] pt-[9px]">语音过短!</p>
  </div>

  <!-- flow arrows and leader lines -->
  <svg class="pointer-events-none absolute left-0 top-0 h-full w-full overflow-visible" aria-hidden="true">
    <g fill="#797979">
      <path d="M658 523H825V507L846 527.500L825 548V532H658Z"/>
      <path d="M1615 529.500H1782V513.500L1803 534L1782 554.500V538.500H1615Z"/>
      <path d="M2454 688H2790V672L2811 692.500L2790 713V697H2454Z"/>
      <path d="M2470 1176.500H2806V1160.500L2827 1181L2806 1201.500V1185.500H2470Z"/>
      <path d="M223 1014H232V1209H248L227.500 1230L207 1209H223Z"/>
      <path d="M2183 1149H2192V1280H2208L2187.500 1301L2167 1280H2183Z"/>
    </g>
    <g stroke="#7f7f7f" stroke-width="2">
      <path d="M2361 255V417"/>
      <path d="M2464 436H2616"/>
      <path d="M2340 571H2569"/>
      <path d="M3019 195H3119"/>
      <path d="M3053 204H3130"/>
      <path d="M3112 696H3288"/>
      <path d="M1891 712H2181"/>
      <path d="M1891 796H2194"/>
      <path d="M2411 779H2552"/>
      <path d="M2445 915H2616"/>
      <path d="M2362 2093H2616"/>
    </g>
  </svg>
</main>
</body>
</html>
